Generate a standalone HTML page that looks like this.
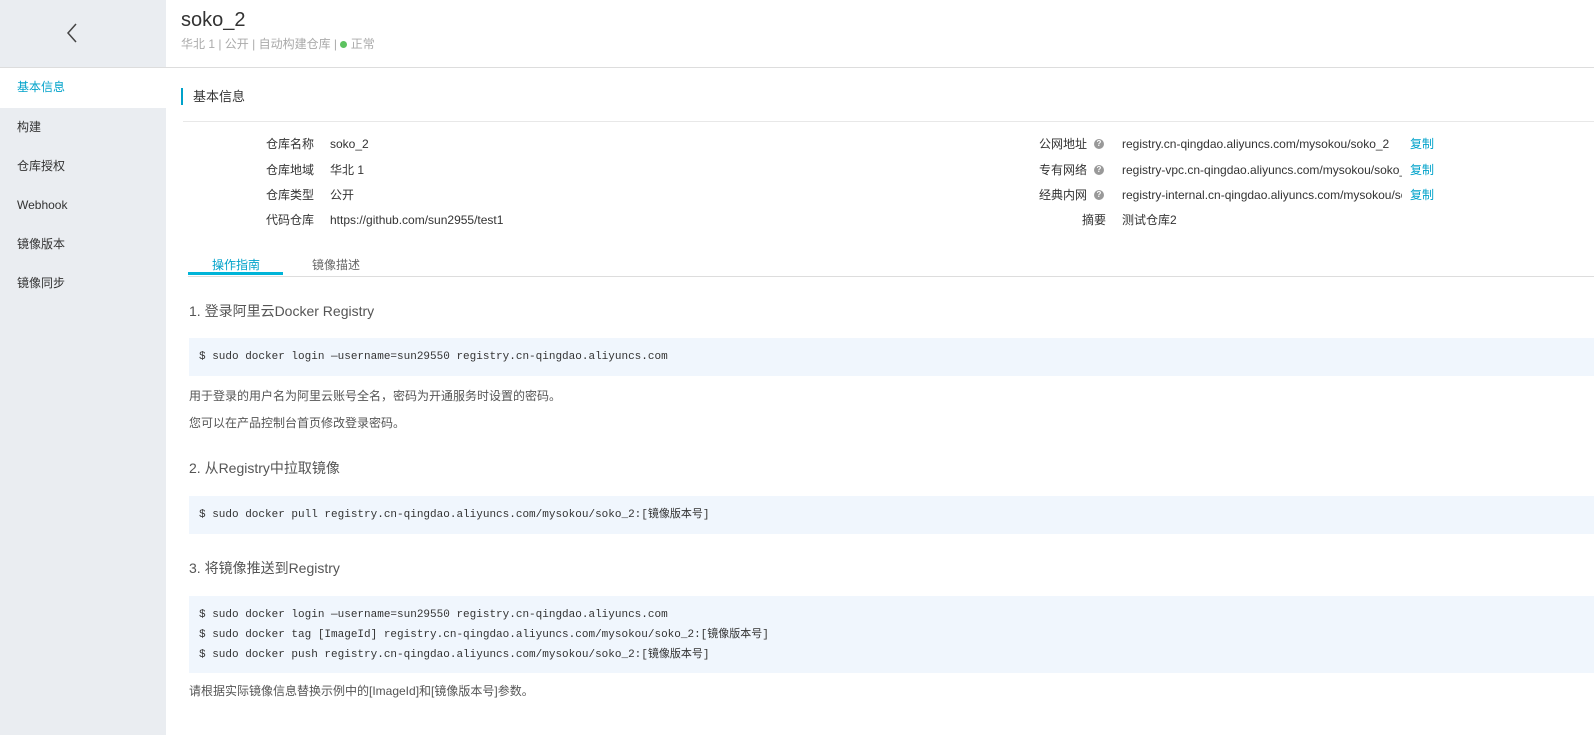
<!DOCTYPE html>
<html><head><meta charset="utf-8"><style>
*{margin:0;padding:0;box-sizing:border-box}
body{width:1594px;height:735px;overflow:hidden;background:#fff;font-family:"Liberation Sans","Noto Sans CJK SC",sans-serif;font-size:12px;line-height:16px;color:#333;position:relative}
.a{position:absolute;white-space:nowrap;line-height:16px}
.side{position:absolute;left:0;top:0;width:166px;height:735px;background:#eaedf1}
.code{position:absolute;left:189px;right:0;background:#f0f6fd;font-family:"Liberation Mono","Noto Sans CJK SC",monospace;font-size:11px;color:#333}
.code div{position:absolute;left:10px;white-space:nowrap;line-height:14px;height:14px}
.lbl{position:absolute;text-align:right;white-space:nowrap;color:#333;line-height:16px}
.q{display:inline-block;width:10px;height:10px;border-radius:50%;background:#999;color:#fff;font-size:8px;line-height:10px;text-align:center;font-weight:bold;position:absolute}
.cp{color:#00a2ca}
h3{position:absolute;left:189px;font-size:14px;line-height:18px;font-weight:normal;color:#555;white-space:nowrap}
.t{position:absolute;left:189px;color:#555;white-space:nowrap;line-height:16px}
</style></head><body>
<div class="side">
 <svg class="a" style="left:66px;top:23px" width="12" height="20" viewBox="0 0 12 20"><path d="M10 1 L2 10 L10 19" stroke="#444" stroke-width="1.5" fill="none"/></svg>
 <div class="a" style="left:0;top:68px;width:166px;height:40px;background:#fff"></div>
 <div class="a" style="left:17px;top:79px;color:#00a2ca">基本信息</div>
 <div class="a" style="left:17px;top:119px">构建</div>
 <div class="a" style="left:17px;top:158px">仓库授权</div>
 <div class="a" style="left:17px;top:197px">Webhook</div>
 <div class="a" style="left:17px;top:236px">镜像版本</div>
 <div class="a" style="left:17px;top:275px">镜像同步</div>
</div>
<div class="a" style="left:0;top:67px;width:1594px;height:1px;background:#ddd"></div>
<div class="a" style="left:181px;top:8px;font-size:20px;line-height:24px;color:#333">soko_2</div>
<div class="a" style="left:181px;top:36px;color:#aaa">华北 1 | 公开 | 自动构建仓库 | <span style="display:inline-block;width:7px;height:7px;border-radius:50%;background:#5cc25f;vertical-align:0"></span> 正常</div>

<div class="a" style="left:181px;top:88px;width:2px;height:17px;background:#00a2ca"></div>
<div class="a" style="left:193px;top:88px;font-size:13px;line-height:17px">基本信息</div>
<div class="a" style="left:183px;top:121px;width:1411px;height:1px;background:#e8e8e8"></div>

<div class="lbl" style="right:1280px;top:136px">仓库名称</div><div class="a" style="left:330px;top:136px">soko_2</div>
<div class="lbl" style="right:1280px;top:162px">仓库地域</div><div class="a" style="left:330px;top:162px">华北 1</div>
<div class="lbl" style="right:1280px;top:187px">仓库类型</div><div class="a" style="left:330px;top:187px">公开</div>
<div class="lbl" style="right:1280px;top:212px">代码仓库</div><div class="a" style="left:330px;top:212px">https://github.com/sun2955/test1</div>

<div class="lbl" style="right:507px;top:136px">公网地址</div><span class="q" style="left:1094px;top:139px">?</span>
<div class="a" style="left:1122px;top:136px;width:280px;overflow:hidden">registry.cn-qingdao.aliyuncs.com/mysokou/soko_2</div><div class="a cp" style="left:1410px;top:136px">复制</div>
<div class="lbl" style="right:507px;top:162px">专有网络</div><span class="q" style="left:1094px;top:165px">?</span>
<div class="a" style="left:1122px;top:162px;width:280px;overflow:hidden">registry-vpc.cn-qingdao.aliyuncs.com/mysokou/soko_2</div><div class="a cp" style="left:1410px;top:162px">复制</div>
<div class="lbl" style="right:507px;top:187px">经典内网</div><span class="q" style="left:1094px;top:190px">?</span>
<div class="a" style="left:1122px;top:187px;width:280px;overflow:hidden">registry-internal.cn-qingdao.aliyuncs.com/mysokou/soko_2</div><div class="a cp" style="left:1410px;top:187px">复制</div>
<div class="lbl" style="right:488px;top:212px">摘要</div><div class="a" style="left:1122px;top:212px">测试仓库2</div>

<div class="a" style="left:212px;top:257px;color:#00a2ca">操作指南</div>
<div class="a" style="left:312px;top:257px;color:#666">镜像描述</div>
<div class="a" style="left:188px;top:276px;width:1406px;height:1px;background:#ddd"></div>
<div class="a" style="left:188px;top:272px;width:95px;height:3px;background:#00b4d8"></div>

<h3 style="top:302px">1. 登录阿里云Docker Registry</h3>
<div class="code" style="top:338px;height:38px"><div style="top:12px">$ sudo docker login —username=sun29550 registry.cn-qingdao.aliyuncs.com</div></div>
<div class="t" style="top:388px">用于登录的用户名为阿里云账号全名，密码为开通服务时设置的密码。</div>
<div class="t" style="top:415px">您可以在产品控制台首页修改登录密码。</div>
<h3 style="top:459px">2. 从Registry中拉取镜像</h3>
<div class="code" style="top:496px;height:38px"><div style="top:12px">$ sudo docker pull registry.cn-qingdao.aliyuncs.com/mysokou/soko_2:[镜像版本号]</div></div>
<h3 style="top:559px">3. 将镜像推送到Registry</h3>
<div class="code" style="top:596px;height:77px">
<div style="top:12px">$ sudo docker login —username=sun29550 registry.cn-qingdao.aliyuncs.com</div>
<div style="top:32px">$ sudo docker tag [ImageId] registry.cn-qingdao.aliyuncs.com/mysokou/soko_2:[镜像版本号]</div>
<div style="top:52px">$ sudo docker push registry.cn-qingdao.aliyuncs.com/mysokou/soko_2:[镜像版本号]</div>
</div>
<div class="t" style="top:683px">请根据实际镜像信息替换示例中的[ImageId]和[镜像版本号]参数。</div>
</body></html>
